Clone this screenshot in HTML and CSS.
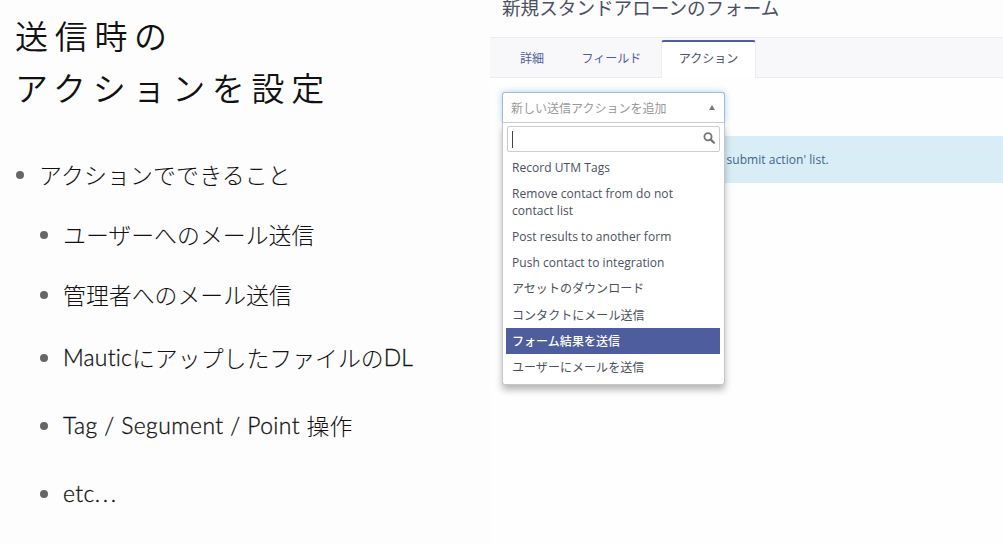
FILE: index.html
```html
<!DOCTYPE html>
<html lang="ja">
<head>
    <meta charset="UTF-8">
    <meta name="viewport" content="width=device-width, initial-scale=1.0">
    <title>送信時のアクションを設定</title>
    <link rel="stylesheet" href="styles.css">
</head>
<body>

<div class="slide">
    <section class="notes">
        <h1>送信時の<br>アクションを設定</h1>
        <ul class="points">
            <li class="top">アクションでできること</li>
            <li>ユーザーへのメール送信</li>
            <li>管理者へのメール送信</li>
            <li class="tall"><span class="latin">Mautic</span>にアップしたファイルの<span class="latin">DL</span></li>
            <li class="taller"><span class="latin words">Tag / Segument / Point </span>操作</li>
            <li class="last"><span class="latin words">etc</span><span class="latin dots">...</span></li>
        </ul>
    </section>

    <section class="app">
        <h2>新規スタンドアローンのフォーム</h2>
        <nav class="tabs">
            <a class="tab tab-details">詳細</a>
            <a class="tab tab-fields">フィールド</a>
            <a class="tab active">アクション</a>
        </nav>
        <div class="panel">
            <div class="alert">submit action' list.</div>
            <div class="chosen">
                <div class="chosen-single">
                    <span>新しい送信アクションを追加</span>
                    <i class="arrow"></i>
                </div>
                <div class="chosen-drop">
                    <div class="search">
                        <i class="caret"></i>
                        <svg width="14" height="14" viewBox="0 0 14 14">
                            <circle cx="6" cy="4.8" r="3.6" fill="none" stroke="#777" stroke-width="1.8"/>
                            <path d="M8.8 7.6 L12 10.8" stroke="#777" stroke-width="2.2" stroke-linecap="round"/>
                        </svg>
                    </div>
                    <ul class="results">
                        <li>Record UTM Tags</li>
                        <li>Remove contact from do not contact list</li>
                        <li>Post results to another form</li>
                        <li>Push contact to integration</li>
                        <li>アセットのダウンロード</li>
                        <li>コンタクトにメール送信</li>
                        <li class="highlighted">フォーム結果を送信</li>
                        <li>ユーザーにメールを送信</li>
                    </ul>
                </div>
            </div>
        </div>
    </section>
</div>

</body>
</html>
```
FILE: styles.css
```css
* {
    box-sizing: border-box;
}
body {
    margin: 0;
    background-color: #fdfdfd;
    overflow: hidden;
}
h1, h2, ul {
    margin: 0;
    padding: 0;
    font-weight: normal;
    list-style: none;
}
.slide {
    display: flex;
    width: 1003px;
    height: 544px;
}

/* left column */
.notes {
    width: 490px;
    padding: 10px 0 0 15px;
    color: #111;
}
.notes h1 {
    font-family: "Noto Sans CJK JP", sans-serif;
    font-size: 33px;
    font-weight: 350;
    line-height: 51.5px;
    letter-spacing: 6.7px;
    white-space: nowrap;
}
.points {
    padding-top: 31px;
    font-family: Lato, "Noto Sans CJK JP", sans-serif;
    font-weight: 300;
}
.points li {
    display: flex;
    align-items: center;
    height: 60px;
    padding-left: 25px;
    padding-bottom: 1px;
    font-size: 22.9px;
    font-variant-ligatures: none;
    white-space: pre;
}
.points li::before {
    content: "";
    width: 8px;
    height: 8px;
    margin: 2px 15px 0 0;
    border-radius: 50%;
    background-color: #666;
}
.points .top {
    padding-left: 1px;
    letter-spacing: 0.15px;
}
.points .tall {
    height: 66px;
}
.points .taller {
    height: 70px;
}
.points .last {
    height: 67px;
}
.latin {
    letter-spacing: 0.2px;
    -webkit-text-stroke: 0.3px #111;
}
.words {
    letter-spacing: 0.42px;
}
.dots {
    letter-spacing: 2.6px;
}

/* form editor */
.app {
    flex: 1;
    background-color: #fdfdfe;
    color: #4a5060;
    font-family: "Open Sans", "Noto Sans CJK JP", sans-serif;
    font-size: 12px;
}
.app h2 {
    height: 37px;
    padding-left: 12px;
    font-size: 18.6px;
    line-height: 16px;
    white-space: nowrap;
}
.tabs {
    display: flex;
    height: 41px;
    border-top: 1px solid #ececf0;
    border-bottom: 1px solid #ececf0;
    background-color: #f8f7fa;
}
.tab {
    height: 40px;
    padding-top: 2px;
    color: #4e5d9d;
    line-height: 38px;
    text-align: center;
}
.tab-details {
    width: 84px;
}
.tab-fields {
    width: 87px;
    padding-right: 12px;
}
.tab.active {
    width: 95px;
    margin-top: 2px;
    padding-top: 0;
    border: 1px solid #ececf0;
    border-top: 2px solid #4e5d9d;
    border-bottom: 0;
    border-radius: 3px 3px 0 0;
    background-color: #fff;
    color: #4a5060;
    line-height: 34px;
}
.panel {
    position: relative;
    height: 466px;
    padding-top: 58px;
    background-color: #fefefe;
}
.alert {
    height: 47px;
    margin-left: 13px;
    padding-left: 223.5px;
    background-color: #d9edf7;
    color: #3f6588;
    line-height: 48px;
    letter-spacing: 0.05px;
}

/* select with search, opened over the alert */
.chosen {
    position: absolute;
    top: 14px;
    left: 12px;
    width: 223px;
}
.chosen-single {
    display: flex;
    align-items: center;
    justify-content: space-between;
    height: 31px;
    padding: 0 9px 0 8px;
    border: 1px solid #abb7cd;
    border-bottom-color: #ccd0d8;
    border-radius: 3px 3px 0 0;
    background-color: #fff;
    box-shadow: 0 0 7px rgba(120, 180, 235, 0.6);
    color: #999;
}
.arrow {
    border: 3px solid transparent;
    border-top: 0;
    border-bottom: 5px solid #777;
}
.chosen-drop {
    position: relative;
    padding: 3px 4px 4px 3px;
    border: 1px solid #c4c6cc;
    border-top: 0;
    border-radius: 0 0 3px 3px;
    background-color: #fff;
    box-shadow: 0 5px 7px rgba(0, 0, 0, 0.28);
}
.search {
    display: flex;
    align-items: center;
    justify-content: space-between;
    height: 26px;
    margin: 0 0 2px 1px;
    padding: 0 3px 0 4px;
    border: 1px solid #ccc;
    border-radius: 2px;
}
.caret {
    width: 1px;
    height: 17px;
    background-color: #444;
}
.results li {
    min-height: 26.15px;
    padding: 5px 30px 4px 6px;
    line-height: 17px;
    letter-spacing: 0.05px;
}
.results .highlighted {
    background-color: #4e5d9d;
    color: #fff;
    font-weight: 500;
}
```
